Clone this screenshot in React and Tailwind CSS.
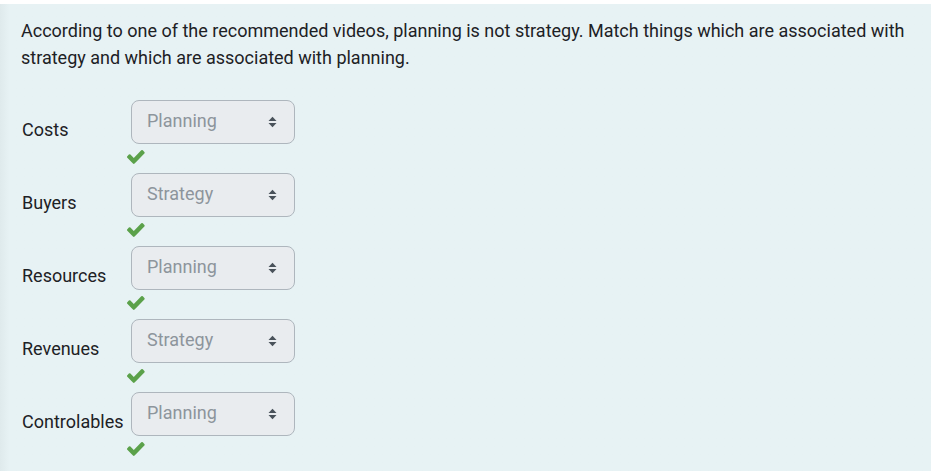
import React from 'react';

const rows = [
  { label: 'Costs', value: 'Planning' },
  { label: 'Buyers', value: 'Strategy' },
  { label: 'Resources', value: 'Planning' },
  { label: 'Revenues', value: 'Strategy' },
  { label: 'Controlables', value: 'Planning' },
];

function Check() {
  return (
    <svg width="18" height="14" viewBox="120 330 1580 1200" className="block" preserveAspectRatio="none">
      <path
        fill="#5ba14a"
        d="M1671 566q0 40-28 68l-724 724-136 136q-28 28-68 28t-68-28l-136-136-362-362q-28-28-28-68t28-68l136-136q28-28 68-28t68 28l294 295 656-657q28-28 68-28t68 28l136 136q28 28 28 68z"
      />
    </svg>
  );
}

function Arrows() {
  return (
    <svg width="9" height="12" viewBox="0 0 9 12" className="block">
      <path d="M0.5 5 L4.5 0.8 L8.5 5 Z" fill="#49525a" />
      <path d="M0.5 7 L4.5 11.2 L8.5 7 Z" fill="#49525a" />
    </svg>
  );
}

export default function App() {
  return (
    <div className="w-[931px] h-[471px] bg-white pt-[4px] overflow-hidden" style={{ fontFamily: 'Roboto, "Liberation Sans", sans-serif' }}>
      <div className="h-full bg-[#e7f2f4] bg-gradient-to-r from-[#dfeaec] from-0% to-[#e7f2f4] to-[1%] pl-[21px] pr-4 pt-[13px] text-[#1d2125]">
        <p className="text-[18px] leading-[27px] w-[900px]">
          According to one of the recommended videos, planning is not strategy. Match things which are associated with strategy and which are associated with planning.
        </p>

        <div className="mt-[29px] flex flex-col gap-[6px]">
          {rows.map((row) => (
            <div key={row.label} className="flex items-center">
              <div className="w-[110px] pl-px text-[18px] pb-[8px]">{row.label}</div>
              <div className="flex flex-col">
                <div className="w-[164px] h-[44px] rounded-[8px] border border-[#aeb6bd] bg-[#e9ecef] flex items-start justify-between pl-[15px] pr-[17px] pt-[8px]">
                  <span className="text-[18px] leading-[24px] text-[#8d959c]">{row.value}</span>
                  <span className="pt-[7px]"><Arrows /></span>
                </div>
                <div className="h-[23px] -ml-[4px] pt-[6px]">
                  <Check />
                </div>
              </div>
            </div>
          ))}
        </div>
      </div>
    </div>
  );
}
